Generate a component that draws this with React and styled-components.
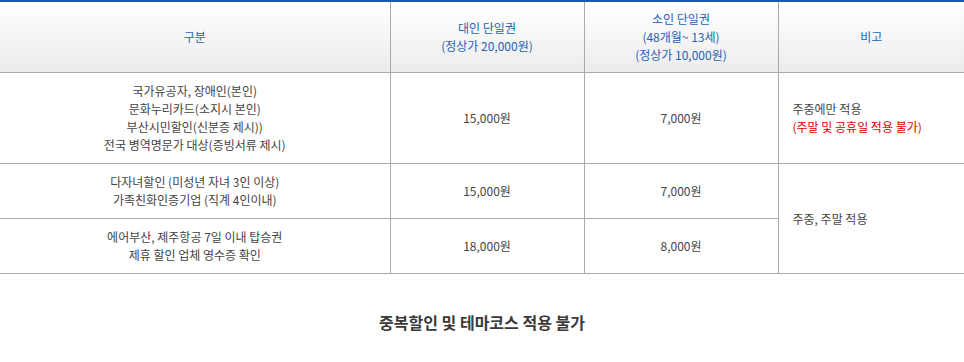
import React from 'react';
import styled, { createGlobalStyle } from 'styled-components';

const GlobalStyle = createGlobalStyle`
  body {
    margin: 0;
    background: #fff;
    font-family: 'Noto Sans CJK KR', 'Noto Sans', sans-serif;
  }
`;

const Wrapper = styled.div`
  width: 964px;
`;

const Table = styled.table`
  width: 100%;
  border-collapse: collapse;
  table-layout: fixed;
  border-top: 2px solid #1f57a8;
  border-bottom: 1px solid #aaa;
  font-size: 12px;
  line-height: 18px;
`;

const HeadCell = styled.th`
  padding: 8px 10px;
  font-weight: normal;
  color: #2463b4;
  text-align: center;
  vertical-align: middle;
  background: linear-gradient(to bottom, #ffffff 0%, #ececec 100%);
  border-left: ${({ $first }) => ($first ? 'none' : '1px solid #aaa')};
`;

const Cell = styled.td`
  padding: 9px 14px;
  color: #444;
  text-align: ${({ $left }) => ($left ? 'left' : 'center')};
  vertical-align: middle;
  border-top: 1px solid #aaa;
  border-left: ${({ $first }) => ($first ? 'none' : '1px solid #aaa')};
`;

const Warn = styled.span`
  color: #e00000;
`;

const Note = styled.p`
  margin: 37px 0 0;
  text-align: center;
  font-size: 16px;
  line-height: 22px;
  font-weight: bold;
  color: #3a3a3a;
`;

const App = () => (
  <Wrapper>
    <GlobalStyle />
    <Table>
      <colgroup>
        <col style={{ width: 390 }} />
        <col style={{ width: 194 }} />
        <col style={{ width: 194 }} />
        <col />
      </colgroup>
      <thead>
        <tr>
          <HeadCell $first>구분</HeadCell>
          <HeadCell>
            대인 단일권
            <br />
            (정상가 20,000원)
          </HeadCell>
          <HeadCell>
            소인 단일권
            <br />
            (48개월~ 13세)
            <br />
            (정상가 10,000원)
          </HeadCell>
          <HeadCell>비고</HeadCell>
        </tr>
      </thead>
      <tbody>
        <tr>
          <Cell $first>
            국가유공자, 장애인(본인)
            <br />
            문화누리카드(소지시 본인)
            <br />
            부산시민할인(신분증 제시))
            <br />
            전국 병역명문가 대상(증빙서류 제시)
          </Cell>
          <Cell>15,000원</Cell>
          <Cell>7,000원</Cell>
          <Cell $left>
            주중에만 적용
            <br />
            <Warn>(주말 및 공휴일 적용 불가)</Warn>
          </Cell>
        </tr>
        <tr>
          <Cell $first>
            다자녀할인 (미성년 자녀 3인 이상)
            <br />
            가족친화인증기업 (직계 4인이내)
          </Cell>
          <Cell>15,000원</Cell>
          <Cell>7,000원</Cell>
          <Cell $left rowSpan={2}>
            주중, 주말 적용
          </Cell>
        </tr>
        <tr>
          <Cell $first>
            에어부산, 제주항공 7일 이내 탑승권
            <br />
            제휴 할인 업체 영수증 확인
          </Cell>
          <Cell>18,000원</Cell>
          <Cell>8,000원</Cell>
        </tr>
      </tbody>
    </Table>
    <Note>중복할인 및 테마코스 적용 불가</Note>
  </Wrapper>
);

export default App;
